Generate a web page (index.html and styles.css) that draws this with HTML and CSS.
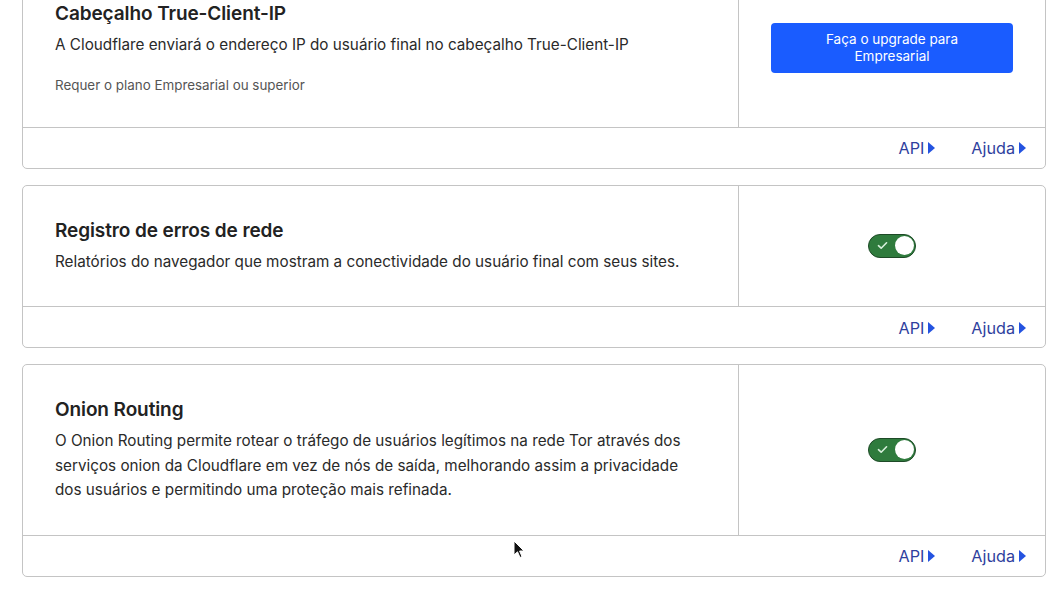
FILE: index.html
```html
<!DOCTYPE html>
<html lang="pt-BR">
<head>
<meta charset="utf-8">
<link rel="stylesheet" href="styles.css">
</head>
<body>
<main class="page">
  <section class="card">
    <div class="card-body">
      <div class="card-main">
        <h3 class="card-title">Cabeçalho True-Client-IP</h3>
        <p class="card-desc">A Cloudflare enviará o endereço IP do usuário final no cabeçalho True-Client-IP</p>
        <p class="card-note">Requer o plano Empresarial ou superior</p>
      </div>
      <div class="card-side">
        <button class="upgrade-btn">Faça o upgrade para<br>Empresarial</button>
      </div>
    </div>
    <div class="card-footer">
      <a class="foot-link" href="#">API<span class="tri"></span></a>
      <a class="foot-link" href="#">Ajuda<span class="tri"></span></a>
    </div>
  </section>

  <section class="card">
    <div class="card-body">
      <div class="card-main">
        <h3 class="card-title">Registro de erros de rede</h3>
        <p class="card-desc">Relatórios do navegador que mostram a conectividade do usuário final com seus sites.</p>
      </div>
      <div class="card-side">
        <span class="toggle"><svg class="check" viewBox="0 0 12 10" width="11" height="9"><path d="M1.5 5.2 L4.5 8 L10.5 2" fill="none" stroke="#d8f0dc" stroke-width="1.8" stroke-linecap="round" stroke-linejoin="round"/></svg><span class="knob"></span></span>
      </div>
    </div>
    <div class="card-footer">
      <a class="foot-link" href="#">API<span class="tri"></span></a>
      <a class="foot-link" href="#">Ajuda<span class="tri"></span></a>
    </div>
  </section>

  <section class="card">
    <div class="card-body">
      <div class="card-main">
        <h3 class="card-title">Onion Routing</h3>
        <p class="card-desc">O Onion Routing permite rotear o tráfego de usuários legítimos na rede Tor através dos serviços onion da Cloudflare em vez de nós de saída, melhorando assim a privacidade dos usuários e permitindo uma proteção mais refinada.</p>
      </div>
      <div class="card-side">
        <span class="toggle"><svg class="check" viewBox="0 0 12 10" width="11" height="9"><path d="M1.5 5.2 L4.5 8 L10.5 2" fill="none" stroke="#d8f0dc" stroke-width="1.8" stroke-linecap="round" stroke-linejoin="round"/></svg><span class="knob"></span></span>
      </div>
    </div>
    <div class="card-footer">
      <a class="foot-link" href="#">API<span class="tri"></span></a>
      <a class="foot-link" href="#">Ajuda<span class="tri"></span></a>
    </div>
  </section>
</main>
<svg class="cursor" width="14" height="20" viewBox="0 0 14 20"><path d="M1 1 L1 15 L4.5 11.8 L7 17.5 L9 16.6 L6.6 11 L11 11 Z" fill="#111" stroke="#fff" stroke-width="1"/></svg>
</body>
</html>
```

FILE: styles.css
```css
* { box-sizing: border-box; }
html, body { margin: 0; padding: 0; background: #fff; overflow: hidden; }
body {
  font-family: Inter, "Noto Sans", "Liberation Sans", sans-serif;
  color: #222;
  width: 1062px;
  height: 599px;
  position: relative;
}
.page {
  margin-top: -32px;
  padding: 0 16px 0 22px;
  display: flex;
  flex-direction: column;
  gap: 16px;
}
.card {
  border: 1px solid #c4c4c4;
  border-radius: 5px;
  background: #fff;
}
.card-body {
  display: flex;
  border-bottom: 1px solid #c4c4c4;
}
.card-main {
  width: 716px;
  padding: 32px;
  border-right: 1px solid #c4c4c4;
}
.card-title {
  margin: 0;
  font-size: 19px;
  line-height: 26px;
  font-weight: 600;
  color: #222;
  letter-spacing: -0.1px;
}
.card-desc {
  margin: 6px 0 0;
  font-size: 15.25px;
  line-height: 24.5px;
  color: #2a2a2a;
}
.card-note {
  margin: 17px 0 0;
  font-size: 13.4px;
  line-height: 20px;
  color: #555;
}
.card-side {
  flex: 1;
  display: flex;
  align-items: center;
  justify-content: center;
  padding: 0 32px;
}
.upgrade-btn {
  width: 100%;
  height: 50px;
  border: 0;
  border-radius: 4px;
  background: #1a5cff;
  color: #fff;
  font-family: inherit;
  font-size: 13.5px;
  line-height: 17px;
}
.toggle {
  position: relative;
  width: 48px;
  height: 24px;
  border-radius: 12px;
  background: #2f7b3d;
  border: 1.5px solid #1e4a27;
  display: block;
}
.check {
  position: absolute;
  left: 8px;
  top: 6px;
}
.knob {
  position: absolute;
  right: 1px;
  top: 1px;
  width: 19px;
  height: 19px;
  border-radius: 50%;
  background: #fff;
}
.card-footer {
  height: 40px;
  display: flex;
  justify-content: flex-end;
  align-items: center;
  gap: 36px;
  padding: 1px 19px 0 0;
}
.foot-link {
  color: #2f3f9e;
  text-decoration: none;
  font-size: 16.2px;
  display: flex;
  align-items: center;
}
.tri {
  width: 0;
  height: 0;
  margin-left: 4px;
  border-top: 6px solid transparent;
  border-bottom: 6px solid transparent;
  border-left: 7px solid #2453e0;
}
.cursor {
  position: absolute;
  left: 513px;
  top: 540px;
}
```
